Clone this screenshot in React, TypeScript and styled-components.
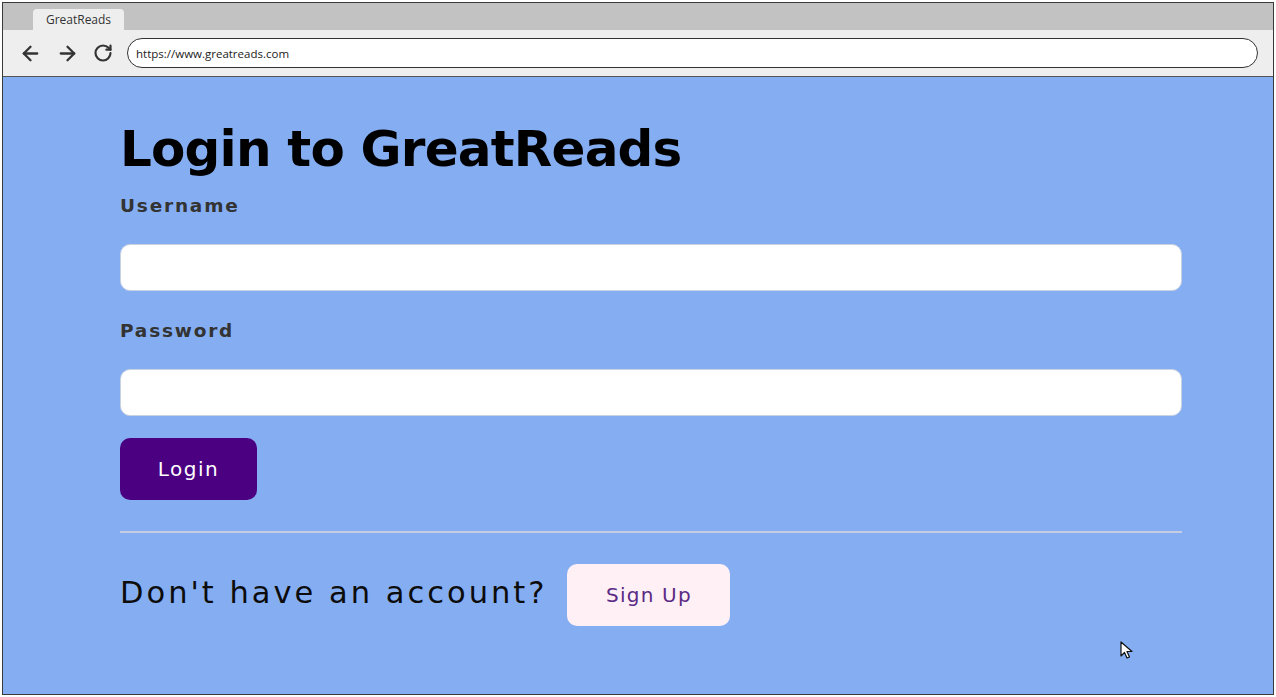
import React from "react";
import styled, { createGlobalStyle } from "styled-components";
import { ArrowLeft, ArrowRight, RotateCw } from "lucide-react";

const Global = createGlobalStyle`
  html, body { margin: 0; padding: 0; background: #ffffff; }
  body { font-family: "DejaVu Sans", "Liberation Sans", sans-serif; }
  * { box-sizing: border-box; }
`;

const Window = styled.div`
  margin: 2px;
  width: 1272px;
  height: 693px;
  border: 1.5px solid #3a3a3a;
  display: flex;
  flex-direction: column;
  overflow: hidden;
  position: relative;
`;

const TabBar = styled.div`
  height: 27px;
  background: #c2c2c2;
  display: flex;
  align-items: flex-end;
  padding-left: 30px;
`;

const Tab = styled.div`
  height: 21px;
  width: 91px;
  background: #eeeeee;
  border-radius: 4px 4px 0 0;
  font-family: "Open Sans", "Liberation Sans", sans-serif;
  font-size: 12px;
  color: #333;
  display: flex;
  align-items: center;
  justify-content: center;
`;

const Toolbar = styled.div`
  height: 47px;
  background: #eeeeee;
  display: flex;
  align-items: center;
  padding: 0 15px 0 16px;
  gap: 14px;
  border-bottom: 1.5px solid #555;
`;

const NavIcon = styled.span`
  display: flex;
  color: #333;
`;

const Address = styled.div`
  flex: 1;
  height: 30px;
  border: 1.5px solid #333;
  border-radius: 15px;
  background: #fff;
  display: flex;
  align-items: center;
  padding-left: 8px;
  font-family: "Open Sans", "Liberation Sans", sans-serif;
  font-size: 11.5px;
  color: #222;
`;

const Content = styled.main`
  flex: 1;
  background: #85aef2;
  padding: 42px 91px 0 117px;
  display: flex;
  flex-direction: column;
`;

const Heading = styled.h1`
  margin: 0 0 15px;
  font-size: 50px;
  font-weight: 700;
  letter-spacing: -0.8px;
  line-height: 60px;
  color: #000;
`;

const Label = styled.label`
  font-size: 18.5px;
  font-weight: 700;
  color: #333333;
  line-height: 24px;
  letter-spacing: 1.8px;
  margin-bottom: 26px;
`;

const Input = styled.input`
  height: 47px;
  width: 100%;
  border: 1.5px solid #c9d2e2;
  border-radius: 10px;
  background: #ffffff;
  margin-bottom: 28px;
  outline: none;
`;

const PrimaryButton = styled.button`
  width: 137px;
  height: 62px;
  border: none;
  border-radius: 10px;
  background: #4b0082;
  color: #ffffff;
  font-family: inherit;
  font-size: 20px;
  font-weight: 400;
  letter-spacing: 1.5px;
  margin-top: -6px;
  cursor: pointer;
`;

const Divider = styled.hr`
  width: 100%;
  border: none;
  border-top: 2px solid #c6cde0;
  margin: 31px 0 31px;
`;

const SignupRow = styled.div`
  display: flex;
  align-items: center;
  gap: 20px;
`;

const Prompt = styled.span`
  font-size: 30.5px;
  font-weight: 400;
  letter-spacing: 3px;
  padding-bottom: 6px;
  color: #0c0c0c;
`;

const SecondaryButton = styled.button`
  width: 163px;
  height: 62px;
  border: none;
  border-radius: 10px;
  background: #fff0f5;
  color: #5b2a86;
  font-family: inherit;
  font-size: 20px;
  font-weight: 400;
  letter-spacing: 1.2px;
  cursor: pointer;
`;

const Cursor = styled.svg`
  position: absolute;
  left: 1117px;
  top: 638px;
`;

export default function App() {
  return (
    <>
      <Global />
      <Window>
        <TabBar>
          <Tab>GreatReads</Tab>
        </TabBar>
        <Toolbar>
          <NavIcon><ArrowLeft size={23} strokeWidth={2.4} /></NavIcon>
          <NavIcon><ArrowRight size={23} strokeWidth={2.4} /></NavIcon>
          <NavIcon><RotateCw size={20} strokeWidth={2.6} /></NavIcon>
          <Address>https://www.greatreads.com</Address>
        </Toolbar>
        <Content>
          <Heading>Login to GreatReads</Heading>
          <Label>Username</Label>
          <Input type="text" />
          <Label>Password</Label>
          <Input type="password" />
          <div>
            <PrimaryButton>Login</PrimaryButton>
          </div>
          <Divider />
          <SignupRow>
            <Prompt>Don't have an account?</Prompt>
            <SecondaryButton>Sign Up</SecondaryButton>
          </SignupRow>
        </Content>
        <Cursor width="16" height="20" viewBox="0 0 16 20">
          <path d="M1 1 L1 15 L4.5 11.5 L7 17 L9.5 16 L7 10.5 L12 10.5 Z" fill="#fff" stroke="#111" strokeWidth="1.2" strokeLinejoin="round" />
        </Cursor>
      </Window>
    </>
  );
}
